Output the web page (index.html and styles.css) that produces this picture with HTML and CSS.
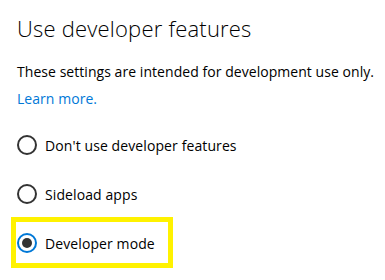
FILE: index.html
```html
<!DOCTYPE html>
<html>
<head>
<meta charset="utf-8">
<link rel="stylesheet" href="styles.css">
</head>
<body>
<main class="page">
  <h1 class="title">Use developer features</h1>
  <p class="desc">These settings are intended for development use only.</p>
  <a class="link" href="#">Learn more.</a>
  <div class="options">
    <label class="option"><span class="radio"></span><span class="label-text">Don't use developer features</span></label>
    <label class="option"><span class="radio"></span><span class="label-text">Sideload apps</span></label>
    <label class="option highlight"><span class="radio checked"></span><span class="label-text">Developer mode</span></label>
  </div>
</main>
</body>
</html>
```
FILE: styles.css
```css
html, body {
  margin: 0;
  background: #fff;
}
.page {
  box-sizing: border-box;
  min-height: 280px;
  padding: 0 0 0 17px;
  font-family: "Open Sans", "Noto Sans", sans-serif;
  color: #000;
  overflow: hidden;
}
.title {
  margin: 0;
  padding-top: 13px;
  font-size: 22px;
  font-weight: 300;
  letter-spacing: 0.2px;
  line-height: 30px;
  color: #000;
  white-space: nowrap;
}
.desc {
  margin: 0;
  padding-top: 19px;
  font-size: 14px;
  letter-spacing: 0.05px;
  line-height: 20px;
  white-space: nowrap;
}
.link {
  display: block;
  margin-top: 7px;
  font-size: 14px;
  letter-spacing: 0.05px;
  line-height: 20px;
  color: #0078d7;
  text-decoration: none;
}
.options {
  display: flex;
  flex-direction: column;
  gap: 29px;
  margin-top: 26px;
  padding-bottom: 20px;
}
.option {
  display: flex;
  align-items: center;
  height: 20px;
  font-size: 14px;
  letter-spacing: 0.1px;
}
.radio {
  box-sizing: border-box;
  width: 20px;
  height: 20px;
  border: 2px solid #333;
  border-radius: 50%;
  margin-right: 8px;
  display: flex;
  align-items: center;
  justify-content: center;
  flex: none;
}
.radio.checked {
  border-color: #0078d7;
}
.radio.checked::after {
  content: "";
  width: 10px;
  height: 10px;
  border-radius: 50%;
  background: #333;
}
.highlight {
  align-self: flex-start;
  border: 5px solid #fff200;
  margin: -16px 0 -16px -6px;
  padding: 11px 13px 10px 1px;
}
```
